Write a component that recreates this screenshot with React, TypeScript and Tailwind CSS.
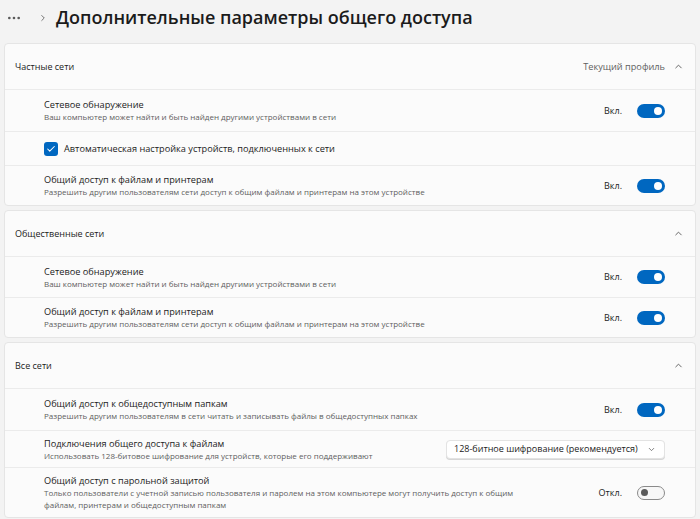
import { Check, ChevronDown, ChevronRight, ChevronUp, MoreHorizontal } from "lucide-react";
import type { ReactNode } from "react";

const font = { fontFamily: '"Open Sans", "Noto Sans", sans-serif' };

function Toggle({ on }: { on: boolean }) {
  return (
    <div className="flex items-center gap-[15px]">
      <span className="text-[9px] text-[#1b1b1b]">{on ? "Вкл." : "Откл."}</span>
      {on ? (
        <div className="flex h-[14px] w-[28px] items-center justify-end rounded-full bg-[#0067c0] pr-[3px]">
          <div className="h-[8px] w-[8px] rounded-full bg-white" />
        </div>
      ) : (
        <div className="flex h-[14px] w-[28px] items-center rounded-full border border-[#8a8a8a] bg-[#f7f7f7] pl-[3px]">
          <div className="h-[7px] w-[7px] rounded-full bg-[#5a5a5a]" />
        </div>
      )}
    </div>
  );
}

function Card({ title, extra, children }: { title: string; extra?: string; children: ReactNode }) {
  return (
    <section className="rounded-[4px] border border-[#e5e5e5] bg-[#fbfbfb]">
      <div className="flex h-[45px] items-center justify-between pl-[10px] pr-[11px]">
        <span className="text-[9px] text-[#1b1b1b]">{title}</span>
        <div className="flex items-center gap-[8px]">
          {extra && <span className="text-[9.2px] text-[#5f5f5f]">{extra}</span>}
          <ChevronUp className="h-[11px] w-[11px] text-[#5a5a5a]" strokeWidth={2} />
        </div>
      </div>
      {children}
    </section>
  );
}

function Row({ title, desc, right, h }: { title: string; desc: ReactNode; right?: ReactNode; h: string }) {
  return (
    <div className={`flex items-center justify-between border-t border-[#ebebeb] pl-[39px] pr-[30px] ${h}`}>
      <div className="flex flex-col">
        <span className="text-[9.2px] leading-[13px] text-[#1b1b1b]">{title}</span>
        <span className="text-[8px] leading-[12px] text-[#606060]">{desc}</span>
      </div>
      {right}
    </div>
  );
}

export default function App() {
  return (
    <div className="flex h-[519px] w-[700px] flex-col overflow-hidden bg-[#f3f3f3]" style={font}>
      <header className="flex h-[35px] shrink-0 items-center pl-[6px]">
        <MoreHorizontal className="h-[16px] w-[16px] text-[#5a5a5a]" strokeWidth={2} />
        <ChevronRight className="ml-[16px] h-[10px] w-[10px] text-[#5a5a5a]" strokeWidth={2} />
        <h1 className="ml-[8px] text-[18px] font-semibold text-[#1b1b1b]">
          Дополнительные параметры общего доступа
        </h1>
      </header>

      <div className="flex flex-col gap-[4px] px-[4px] pt-[8px]">
        <Card title="Частные сети" extra="Текущий профиль">
          <Row
            h="h-[42px]"
            title="Сетевое обнаружение"
            desc="Ваш компьютер может найти и быть найден другими устройствами в сети"
            right={<Toggle on />}
          />
          <div className="flex h-[34px] items-center gap-[6px] border-t border-[#ebebeb] pl-[39px]">
            <div className="flex h-[14px] w-[14px] items-center justify-center rounded-[3px] bg-[#0067c0]">
              <Check className="h-[10px] w-[10px] text-white" strokeWidth={2.5} />
            </div>
            <span className="text-[9.2px] text-[#1b1b1b]">Автоматическая настройка устройств, подключенных к сети</span>
          </div>
          <Row
            h="h-[40px]"
            title="Общий доступ к файлам и принтерам"
            desc="Разрешить другим пользователям сети доступ к общим файлам и принтерам на этом устройстве"
            right={<Toggle on />}
          />
        </Card>

        <Card title="Общественные сети">
          <Row
            h="h-[41px]"
            title="Сетевое обнаружение"
            desc="Ваш компьютер может найти и быть найден другими устройствами в сети"
            right={<Toggle on />}
          />
          <Row
            h="h-[40px]"
            title="Общий доступ к файлам и принтерам"
            desc="Разрешить другим пользователям сети доступ к общим файлам и принтерам на этом устройстве"
            right={<Toggle on />}
          />
        </Card>

        <Card title="Все сети">
          <Row
            h="h-[42px]"
            title="Общий доступ к общедоступным папкам"
            desc="Разрешить другим пользователям в сети читать и записывать файлы в общедоступных папках"
            right={<Toggle on />}
          />
          <Row
            h="h-[37px]"
            title="Подключения общего доступа к файлам"
            desc="Использовать 128-битовое шифрование для устройств, которые его поддерживают"
            right={
              <div className="flex h-[19px] w-[219px] items-center justify-between rounded-[4px] border border-[#e3e3e3] bg-white pl-[7px] pr-[8px] shadow-[0_1px_0_#d6d6d6]">
                <span className="whitespace-nowrap text-[9px] text-[#1b1b1b]">128-битное шифрование (рекомендуется)</span>
                <ChevronDown className="h-[9px] w-[9px] text-[#5a5a5a]" strokeWidth={2} />
              </div>
            }
          />
          <Row
            h="h-[50px]"
            title="Общий доступ с парольной защитой"
            desc={
              <>
                Только пользователи с учетной записью пользователя и паролем на этом компьютере могут получить доступ к общим
                <br />
                файлам, принтерам и общедоступным папкам
              </>
            }
            right={<Toggle on={false} />}
          />
        </Card>
      </div>
    </div>
  );
}
